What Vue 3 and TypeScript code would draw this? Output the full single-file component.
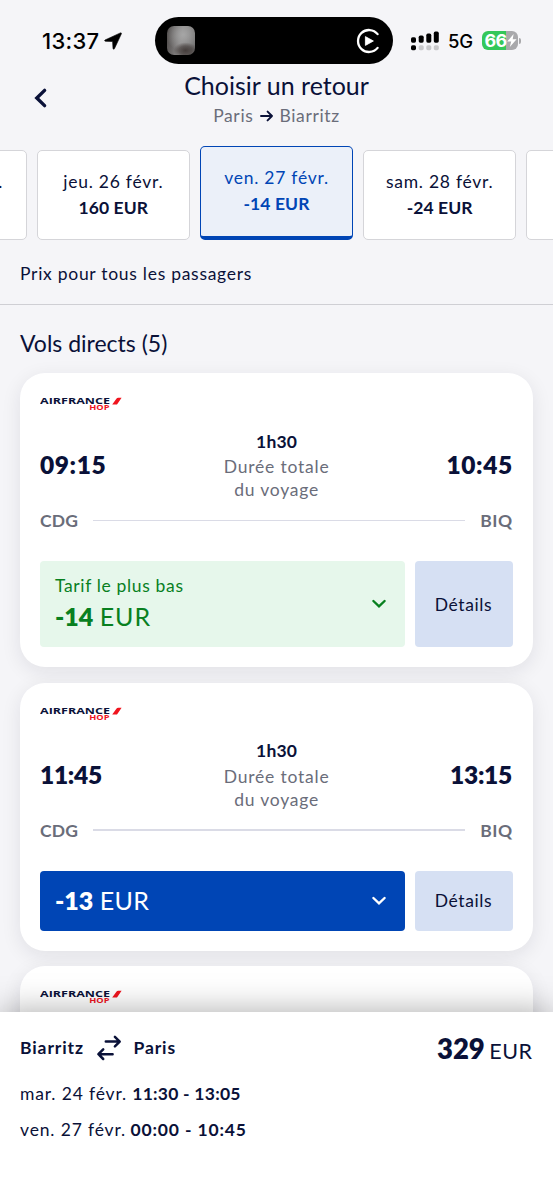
<script setup lang="ts">
interface DayOption {
  id: string
  label: string
  price: string
  selected?: boolean
}

interface Flight {
  id: number
  departure: string
  arrival: string
  amount: string
  lowest: boolean
  collapsed?: boolean
}

const days: DayOption[] = [
  { id: 'd25', label: 'mer. 25 févr.', price: '-14 EUR' },
  { id: 'd26', label: 'jeu. 26 févr.', price: '160 EUR' },
  { id: 'd27', label: 'ven. 27 févr.', price: '-14 EUR', selected: true },
  { id: 'd28', label: 'sam. 28 févr.', price: '-24 EUR' },
  { id: 'd01', label: 'dim. 1 mars', price: '-24 EUR' },
]

const flights: Flight[] = [
  { id: 1, departure: '09:15', arrival: '10:45', amount: '-14', lowest: true },
  { id: 2, departure: '11:45', arrival: '13:15', amount: '-13', lowest: false },
  { id: 3, departure: '', arrival: '', amount: '', lowest: false, collapsed: true },
]

// Hours with several narrow "1" digits are set tighter.
const isNarrow = (hour: string): boolean => hour.split('1').length > 2
</script>

<template>
  <div class="screen">
    <div class="status">
      <div class="clock">
        <span class="time">13:37</span>
        <svg class="loc" width="18" height="18" viewBox="0 0 18 18"><path d="M16.4 .9L1 8Q0 8.9 1.4 9.3L8.6 9.5L9 16.4Q9.6 18 10.5 16.6L17.4 1.8Q17.6 .6 16.4 .9Z" fill="#000" stroke="#000" stroke-width=".6" /></svg>
      </div>
      <div class="island">
        <span class="thumb"></span>
        <svg width="24" height="26" viewBox="0 0 24 26">
          <path d="M21.6 6.1A11 11 0 1 0 21.6 19.9" fill="none" stroke="#fff" stroke-width="2.3" stroke-linecap="round" />
          <path d="M9.4 8.6v8.8l8-4.4z" fill="#fff" stroke="#fff" stroke-width=".8" stroke-linejoin="round" />
        </svg>
      </div>
      <svg class="signal" width="29" height="20" viewBox="0 0 29 20">
        <g fill="#000">
          <rect x="0" y="6.3" width="5" height="5.4" rx="1.6" />
          <rect x="7.7" y="4.6" width="5" height="7.1" rx="1.6" />
          <rect x="15.3" y="2.6" width="5" height="9.1" rx="1.6" />
          <rect x="22.8" y=".6" width="5" height="11.1" rx="1.6" />
          <rect x="0" y="14.2" width="5" height="5" rx="1.6" />
        </g>
        <g fill="#c8c8ca">
          <rect x="7.7" y="14.2" width="5" height="5" rx="1.6" />
          <rect x="15.3" y="14.2" width="5" height="5" rx="1.6" />
          <rect x="22.8" y="14.2" width="5" height="5" rx="1.6" />
        </g>
      </svg>
      <span class="net">5G</span>
      <div class="battery">
        <span class="level">66</span>
        <svg width="10" height="13" viewBox="0 0 10 13"><path d="M6.6 0L.2 7.6h4L2.8 13 9.6 5.3H5.7z" fill="#fff" /></svg>
      </div>
      <span class="nub"></span>
    </div>

    <header class="header">
      <svg class="back" width="16" height="24" viewBox="0 0 16 24"><path d="M12.6 4.4L4.8 12l7.8 7.6" fill="none" stroke="#0a1138" stroke-width="3.4" stroke-linecap="round" stroke-linejoin="miter" /></svg>
      <div class="heading">
        <h1 class="title">Choisir un retour</h1>
        <p class="route">
          <span>Paris</span>
          <svg width="13" height="12" viewBox="0 0 13 12"><path d="M1 6h11M7.6 1.6L12 6l-4.4 4.4" fill="none" stroke="#0a1138" stroke-width="1.9" stroke-linecap="round" stroke-linejoin="round" /></svg>
          <span>Biarritz</span>
        </p>
      </div>
      <span class="spacer"></span>
    </header>

    <div class="days">
      <div v-for="d in days" :key="d.id" class="day" :class="{ selected: d.selected }">
        <span class="day-label">{{ d.label }}</span>
        <span class="day-price">{{ d.price }}</span>
      </div>
    </div>

    <p class="note">Prix pour tous les passagers</p>

    <div class="list">
      <h2 class="section">Vols directs (5)</h2>
      <article v-for="f in flights" :key="f.id" class="card" :class="{ collapsed: f.collapsed }">
        <svg class="logo" width="84" height="16" viewBox="0 0 84 16">
          <text class="brand" x="0" y="8.4" textLength="70" lengthAdjust="spacingAndGlyphs">AIRFRANCE</text>
          <text class="hop" x="49.3" y="14.2" textLength="20.2" lengthAdjust="spacingAndGlyphs">HOP</text>
          <path d="M72.2 8.6L76.4 2.8Q77 1.7 78.2 1.7H81.6L77 8.6z" fill="#f0141e" />
        </svg>
        <template v-if="!f.collapsed">
          <div class="times">
            <span class="hour" :class="{ narrow: isNarrow(f.departure) }">{{ f.departure }}</span>
            <div class="duration">
              <strong class="dur">1h30</strong>
              <span>Durée totale</span>
              <span>du voyage</span>
            </div>
            <span class="hour right" :class="{ narrow: isNarrow(f.arrival) }">{{ f.arrival }}</span>
          </div>
          <div class="airports">
            <span class="code">CDG</span>
            <span class="line"></span>
            <span class="code biq">BIQ</span>
          </div>
          <div class="actions" :class="{ lowest: f.lowest }">
            <div class="fare">
              <div class="fare-text">
                <span v-if="f.lowest" class="tag">Tarif le plus bas</span>
                <span class="price"><b>{{ f.amount }}</b> <span class="cur">EUR</span></span>
              </div>
              <svg width="16" height="10" viewBox="0 0 16 10"><path d="M2.4 2L8 7.4 13.6 2" fill="none" stroke="currentColor" stroke-width="2.4" stroke-linecap="round" stroke-linejoin="miter" /></svg>
            </div>
            <div class="details">Détails</div>
          </div>
        </template>
      </article>
    </div>

    <footer class="footer">
      <div class="summary">
        <span class="city">Biarritz</span>
        <svg width="26" height="26" viewBox="0 0 26 26"><g fill="none" stroke="#0a1138" stroke-width="2.5" stroke-linecap="round" stroke-linejoin="round"><path d="M9.8 6.6h13.8M18.9 1.8l4.8 4.8-4.8 4.8" /><path d="M16.6 19.2H2.6M7.2 14.4l-4.8 4.8L7.2 24" /></g></svg>
        <span class="city">Paris</span>
        <span class="total"><b>329</b><span class="total-cur">EUR</span></span>
      </div>
      <p class="leg"><span class="leg-day">mar. 24 févr.</span> <b class="out">11:30 - 13:05</b></p>
      <p class="leg"><span class="leg-day">ven. 27 févr.</span> <b class="inbound">00:00 - 10:45</b></p>
    </footer>
  </div>
</template>

<style>
body {
  margin: 0;
  background: #f5f5f8;
}
</style>

<style scoped>
* {
  box-sizing: border-box;
}
svg {
  display: block;
  flex: none;
}
.screen {
  width: 553px;
  height: 1200px;
  overflow: hidden;
  display: flex;
  flex-direction: column;
  background: #f5f5f8;
  color: #0a1138;
  font-family: Lato, "Open Sans", sans-serif;
  font-size: 17.5px;
  white-space: nowrap;
}
.status {
  flex: none;
  height: 64px;
  padding-top: 17px;
  display: flex;
  align-items: center;
  color: #000;
  font-family: Inter, sans-serif;
}
.clock {
  width: 155px;
  padding-left: 42px;
  display: flex;
  align-items: center;
  gap: 5px;
}
.time {
  font-size: 22px;
  font-weight: 500;
  letter-spacing: 0.3px;
}
.island {
  width: 238px;
  height: 47px;
  border-radius: 24px;
  background: #000;
  padding: 0 13px 0 12px;
  display: flex;
  align-items: center;
  justify-content: space-between;
}
.thumb {
  width: 28px;
  height: 29px;
  border-radius: 7px;
  background:
    radial-gradient(ellipse 12px 8px at 66% 84%, rgba(62, 54, 52, 0.9) 0%, rgba(64, 56, 54, 0.6) 55%, transparent 100%),
    radial-gradient(circle at 58% 30%, #a6a6a6, transparent 65%),
    linear-gradient(100deg, #4a4645, #8a8888 50%, #6b6a6a);
}
.signal {
  margin-left: 18px;
}
.net {
  margin-left: 8px;
  width: 26px;
  font-size: 18.5px;
  font-weight: 500;
  letter-spacing: -0.3px;
}
.battery {
  margin-left: 8px;
  width: 36px;
  height: 19px;
  border-radius: 6px;
  background: linear-gradient(90deg, #34c759 66%, #a9a9ac 66%);
  color: #fff;
  display: flex;
  align-items: center;
  padding-left: 2.5px;
}
.level {
  font-size: 18px;
  font-weight: 700;
  letter-spacing: -0.6px;
}
.nub {
  width: 2px;
  height: 6px;
  margin-left: 1px;
  border-radius: 0 2px 2px 0;
  background: #a9a9ac;
}
.header {
  flex: none;
  height: 82px;
  padding: 0 32px;
  display: flex;
  justify-content: space-between;
}
.back {
  margin-top: 22px;
}
.spacer {
  width: 16px;
}
.heading {
  display: flex;
  flex-direction: column;
  align-items: center;
}
.title {
  margin: 5px 0 0;
  font-size: 25px;
  line-height: 32px;
  font-weight: 400;
}
.route {
  margin: 3px 0 0;
  line-height: 24px;
  display: flex;
  align-items: center;
  gap: 6.5px;
  letter-spacing: 0.65px;
  color: #6a6d7a;
}
.days {
  flex: none;
  height: 94px;
  margin-left: -126.4px;
  display: flex;
  align-items: flex-end;
  gap: 10.2px;
}
.day {
  flex: none;
  width: 153px;
  height: 90px;
  border: 1.5px solid #d5d5d9;
  border-radius: 5px;
  background: #fff;
  display: flex;
  flex-direction: column;
  align-items: center;
  padding-top: 18px;
  line-height: 26px;
}
.day.selected {
  height: 94px;
  border: 1px solid #0045b5;
  border-bottom-width: 4px;
  background: #ebf0f9;
  color: #0045b5;
}
.day-label {
  letter-spacing: 0.75px;
}
.day-price {
  font-size: 17.5px;
  font-weight: 700;
  letter-spacing: 0.1px;
}
.note {
  flex: none;
  margin: 0;
  height: 65px;
  padding: 21px 20px 0;
  line-height: 26px;
  letter-spacing: 0.72px;
  border-bottom: 1px solid #cfcfd4;
}
.section {
  flex: none;
  margin: 0 0 -15.5px;
  height: 68px;
  padding-top: 22px;
  font-size: 23px;
  line-height: 32px;
  font-weight: 400;
}
.list {
  flex: 1;
  min-height: 0;
  overflow: hidden;
  padding: 0 20.5px 0 20px;
  display: flex;
  flex-direction: column;
  gap: 15.5px;
}
.card {
  flex: none;
  border-radius: 25px;
  background: #fff;
  padding: 20px;
  box-shadow: 0 5px 20px rgba(20, 20, 40, 0.09);
}
.card.collapsed {
  height: 268px;
}
.logo {
  margin: 3px 0 16px;
}
.brand,
.hop {
  font-family: "Open Sans", sans-serif;
  font-weight: 700;
}
.brand {
  font-size: 8.8px;
  fill: #0a1138;
}
.hop {
  font-size: 6.6px;
  fill: #f0141e;
}
.times {
  height: 73.5px;
  display: grid;
  grid-template-columns: 1fr auto 1fr;
  align-items: center;
}
.hour {
  font-size: 24.5px;
  font-weight: 800;
  letter-spacing: 0.6px;
}
.hour.narrow {
  letter-spacing: -0.3px;
}
.right {
  text-align: right;
  margin-right: -0.3px;
}
.right.narrow {
  margin-right: 0.6px;
}
.duration {
  display: flex;
  flex-direction: column;
  align-items: center;
  line-height: 23px;
  letter-spacing: 0.8px;
  margin-left: 0.8px;
  color: #6a6d7a;
}
.dur {
  line-height: 26.5px;
  font-size: 17.5px;
  letter-spacing: 0.2px;
  color: #0a1138;
}
.airports {
  margin-top: 7px;
  height: 24px;
  display: flex;
  align-items: center;
  color: #6a6d7a;
  font-size: 17.5px;
  font-weight: 700;
  letter-spacing: 0.2px;
}
.biq {
  letter-spacing: 0.6px;
  margin-right: -0.3px;
}
.line {
  flex: 1;
  height: 1.5px;
  margin: 0 15px 0 14.5px;
  background: #dadbe6;
}
.actions {
  margin-top: 28.5px;
  height: 60px;
  display: flex;
  gap: 10px;
}
.actions.lowest {
  height: 86px;
}
.fare {
  flex: 1;
  border-radius: 4px;
  background: #0045b5;
  color: #fff;
  display: flex;
  align-items: center;
  justify-content: space-between;
  padding: 0 17.5px 0 15px;
}
.lowest .fare {
  background: #e6f7eb;
  color: #08801f;
}
.fare-text {
  display: flex;
  flex-direction: column;
  padding-bottom: 1.5px;
}
.lowest .fare-text {
  padding-bottom: 2.5px;
}
.tag {
  line-height: 26px;
  padding-top: 1px;
  letter-spacing: 0.65px;
}
.price {
  font-size: 25px;
  line-height: 34px;
}
.price b {
  font-weight: 800;
}
.cur {
  letter-spacing: 0.3px;
}
.lowest .cur {
  letter-spacing: 0.9px;
}
.details {
  width: 98px;
  border-radius: 4px;
  background: #d6e0f3;
  display: flex;
  align-items: center;
  justify-content: center;
  letter-spacing: 0.6px;
}
.footer {
  position: relative;
  z-index: 1;
  flex: none;
  height: 188px;
  padding: 16px 20px 0;
  background: #fff;
  box-shadow: 0 0 32px rgba(0, 0, 0, 0.34);
}
.summary {
  height: 40px;
  display: flex;
  align-items: center;
}
.summary svg {
  margin: 0 11.5px 0 12px;
}
.city {
  font-weight: 700;
  letter-spacing: 0.9px;
  padding-bottom: 2px;
}
.total {
  margin-left: auto;
  margin-right: 0.5px;
  padding-top: 1px;
  font-size: 21.5px;
  display: flex;
  align-items: baseline;
  gap: 4.5px;
}
.total b {
  font-size: 27.5px;
  font-weight: 800;
}
.total-cur {
  letter-spacing: 0.5px;
}
.leg {
  margin: 8px 0 0;
  height: 28px;
  line-height: 35px;
}
.leg-day {
  letter-spacing: 0.85px;
}
.out {
  margin-left: 0.8px;
  letter-spacing: 0.25px;
}
.inbound {
  letter-spacing: 0.85px;
}
</style>
